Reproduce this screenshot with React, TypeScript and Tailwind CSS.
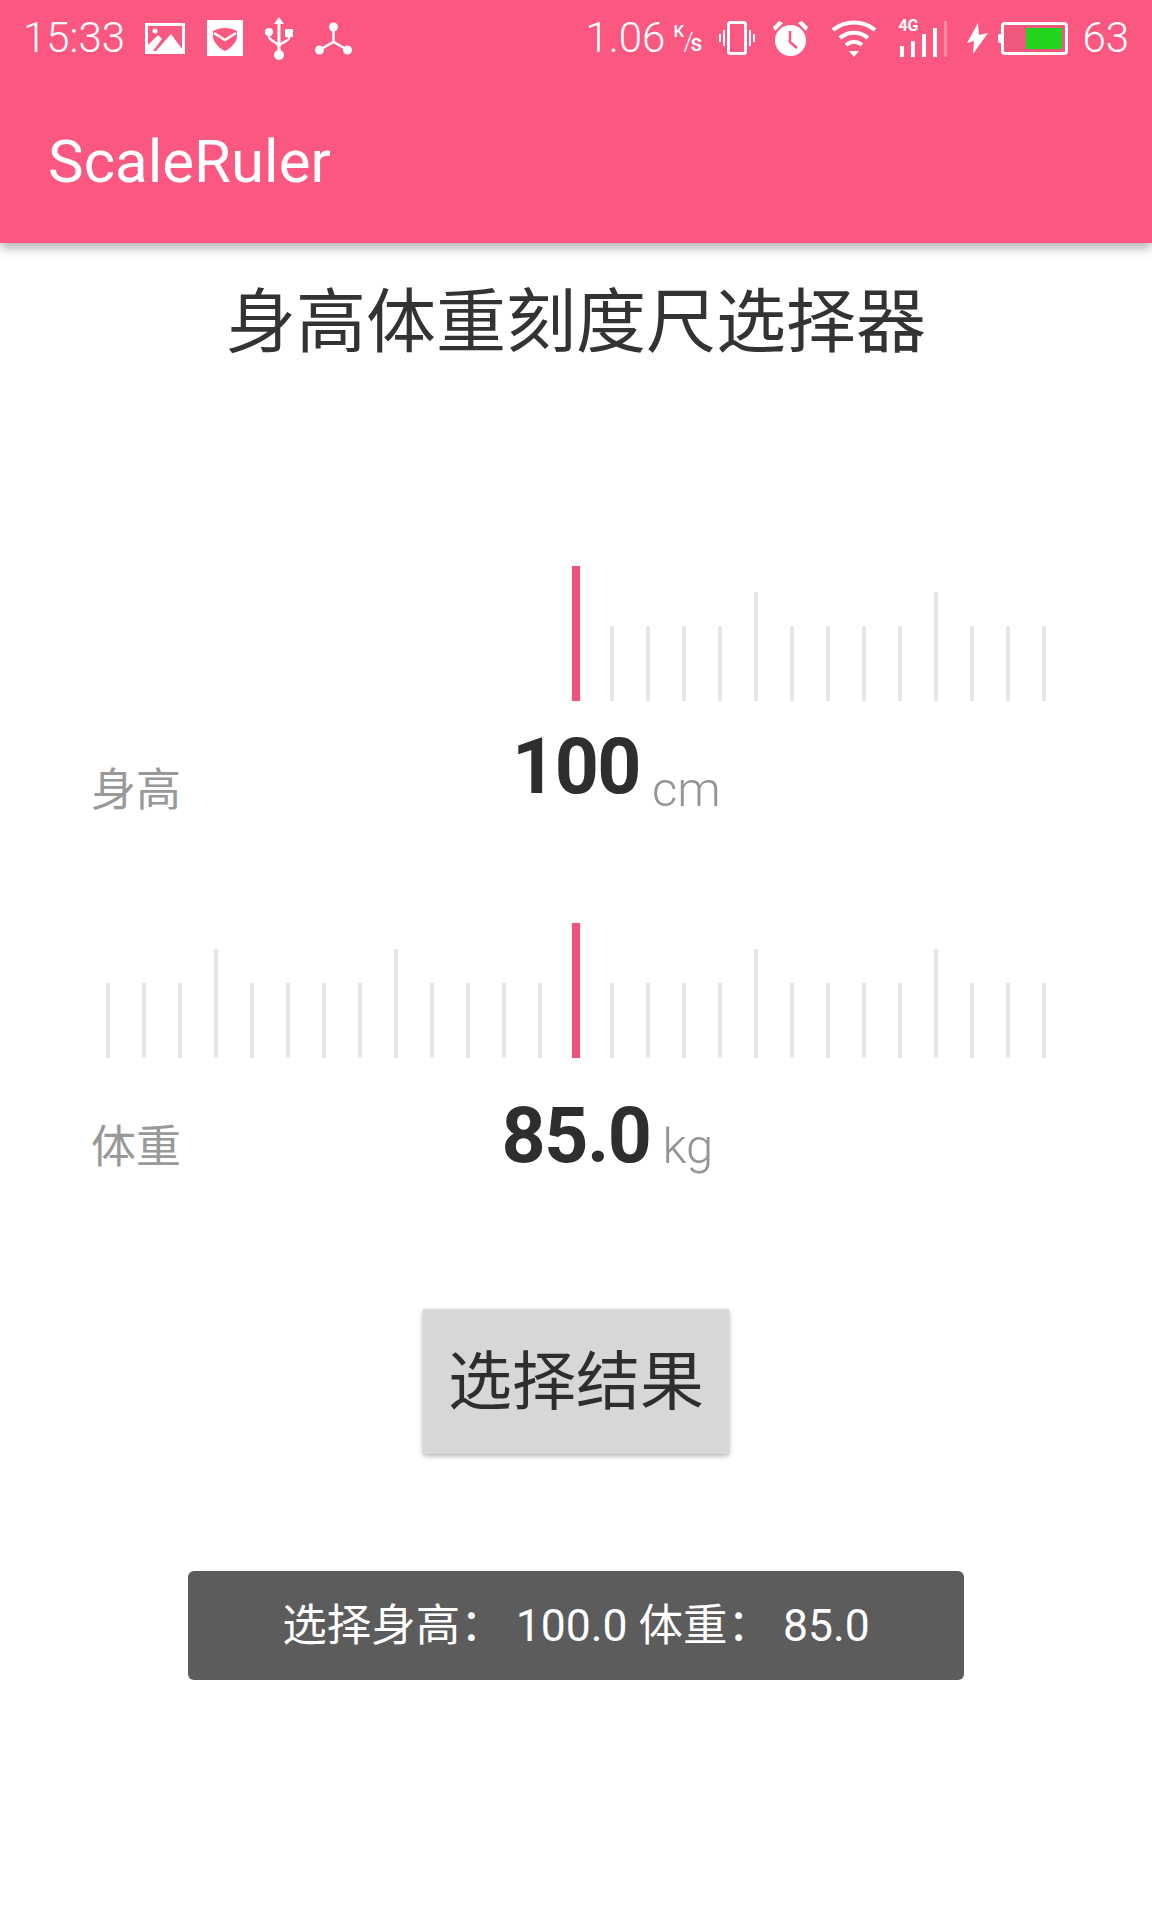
const TICKS = Array.from({ length: 27 }, (_, i) => i - 13)

function StatusBar() {
  return (
    <div className="flex items-center h-[76px] pl-[23px] pr-[23px] text-white">
      <span className="text-[42px] font-light leading-none w-[100px]">15:33</span>
      {/* picture */}
      <svg className="ml-[22px] w-[40px] h-[31px]" viewBox="0 0 40 31">
        <path fill="#fff" fillRule="evenodd" d="M0 0h40v31H0zM3 3v19l10-10 4 4-9 12h3l15-17 11 15V3z" />
        <circle cx="10" cy="8" r="2.5" fill="#fff" />
      </svg>
      {/* pocket */}
      <svg className="ml-[22px] w-[36px] h-[36px]" viewBox="0 0 36 36">
        <path fill="#fff" fillRule="evenodd" d="M0 0h36v36H0zM6 11v6c0 5 8 13 12 14 4-1 12-9 12-14v-6C23 7 13 7 6 11z" />
        <path fill="none" stroke="#fff" strokeWidth="2.5" d="M7 13l11 7 11-7" />
      </svg>
      {/* usb */}
      <svg className="ml-[22px] w-[28px] h-[43px]" viewBox="0 0 28 43">
        <path fill="#fff" d="M14 0l5 7h-3.5v26h-3V7H9z" />
        <circle cx="14" cy="38" r="5" fill="#fff" />
        <circle cx="4" cy="15" r="4" fill="#fff" />
        <rect x="20" y="12" width="8" height="8" fill="#fff" />
        <path fill="none" stroke="#fff" strokeWidth="2.5" d="M4 15v5c0 3 9 6 10 9M24 18v3c0 3-9 5-10 8" />
      </svg>
      {/* tree */}
      <svg className="ml-[22px] w-[37px] h-[33px]" viewBox="0 0 37 33">
        <circle cx="18.5" cy="5" r="4.5" fill="#fff" />
        <circle cx="4.5" cy="28" r="4.5" fill="#fff" />
        <circle cx="32.5" cy="28" r="4.5" fill="#fff" />
        <path fill="none" stroke="#fff" strokeWidth="2.5" d="M18.5 5v15M4.5 28l14-8 14 8" />
      </svg>

      <span className="ml-auto text-[42px] font-light leading-none">1.06</span>
      {/* K/s */}
      <span className="relative ml-[8px] w-[29px] h-[31px] text-[17px] font-medium leading-none">
        <span className="absolute left-0 top-0">K</span>
        <span className="absolute left-[10px] top-[7px] text-[25px] font-light">/</span>
        <span className="absolute right-0 -bottom-[1px] text-[23px]">s</span>
      </span>
      {/* vibrate */}
      <svg className="ml-[17px] w-[36px] h-[34px]" viewBox="0 0 36 34">
        <rect x="9.5" y="1.5" width="17" height="31" rx="2" fill="none" stroke="#fff" strokeWidth="3" />
        <path fill="none" stroke="#fff" strokeWidth="2" d="M5 9v16M1 13v8M31 9v16M35 13v8" />
      </svg>
      {/* alarm */}
      <svg className="ml-[18px] w-[35px] h-[35px]" viewBox="0 0 35 35">
        <circle cx="17.5" cy="19.5" r="15.5" fill="#fff" />
        <path fill="#fff" d="M0 6l6-6 4 2-8 8zM35 6l-6-6-4 2 8 8z" />
        <path fill="none" stroke="#fa5880" strokeWidth="2.5" d="M17 10v11l7 6" />
      </svg>
      {/* wifi */}
      <svg className="ml-[23px] w-[46px] h-[38px]" viewBox="0 0 46 38">
        <path fill="none" stroke="#fff" strokeWidth="4" d="M2 11c12-10 30-10 42 0M9 19c8-7 20-7 28 0M15 26c5-4 11-4 16 0" />
        <path fill="#fff" d="M18 32h10l-5 6z" />
      </svg>
      {/* signal */}
      <div className="relative ml-[21px] w-[49px] h-[38px]">
        <span className="absolute left-0 -top-[1px] text-[16px] font-bold leading-none">4G</span>
        <div className="absolute inset-0 flex items-end gap-[7px] pl-[2px]">
          <div className="w-[4px] h-[11px] bg-white" />
          <div className="w-[4px] h-[16px] bg-white" />
          <div className="w-[4px] h-[23px] bg-white" />
          <div className="w-[4px] h-[29px] bg-white" />
          <div className="w-[3px] h-[36px] bg-white/30" />
        </div>
      </div>
      {/* bolt */}
      <svg className="ml-[20px] w-[21px] h-[31px]" viewBox="0 0 21 31">
        <path fill="#fff" d="M11 0L0 20l7-2-1 13 15-21-9 2z" />
      </svg>
      {/* battery */}
      <div className="relative ml-[13px] w-[67px] h-[33px] flex justify-end items-center pr-[3px] rounded-[4px] border-[3px] border-white bg-[#dc5a78]/40">
        <div className="absolute -left-[6px] top-[9px] w-[3px] h-[9px] rounded-l-[2px] bg-white" />
        <div className="w-[36px] h-[21px] bg-[#22d31d]" />
      </div>
      <span className="ml-[14px] text-[42px] font-light leading-none">63</span>
    </div>
  )
}

function Ruler({ leftTicks }: { leftTicks: boolean }) {
  return (
    <div className="flex items-end justify-center h-[135px]">
      {TICKS.map(k => (
        <div key={k} className="w-[36px] flex justify-center">
          {k === 0 && <div className="w-[8px] h-[135px] bg-[#f0527b]" />}
          {k !== 0 && (k > 0 || leftTicks) && (
            <div className={`w-[4px] bg-[#e6e6e6] ${k % 5 === 0 ? 'h-[109px]' : 'h-[75px]'}`} />
          )}
        </div>
      ))}
    </div>
  )
}

function Measure({ label, value, unit, labelClass, unitClass }: { label: string; value: string; unit: string; labelClass: string; unitClass: string }) {
  return (
    <div className="grid grid-cols-[1fr_auto_1fr] items-start h-[87px]">
      <span className={`pl-[91px] text-[45px] leading-none text-[#999] ${labelClass}`}>{label}</span>
      <span className="text-[77px] font-bold tracking-[-1.5px] leading-none text-[#2e2e2e]">{value}</span>
      <span className={`text-[49px] font-light leading-none text-[#949494] ${unitClass}`}>{unit}</span>
    </div>
  )
}

export default function App() {
  return (
    <div className="w-[1152px] h-[1920px] bg-white overflow-hidden font-['Roboto','Noto_Sans_CJK_SC',sans-serif]">
      <header className="h-[243px] bg-[#fa5880] shadow-[0_5px_10px_rgba(0,0,0,0.3)] relative">
        <StatusBar />
        <div className="pl-[48px] pt-[56px] text-[60px] leading-none text-white">ScaleRuler</div>
      </header>

      <h1 className="pt-[42px] text-center text-[70px] leading-[76px] font-normal text-[#333]">身高体重刻度尺选择器</h1>

      <div className="mt-[205px]"><Ruler leftTicks={false} /></div>
      <div className="mt-[28px]"><Measure label="身高" value="100" unit="cm" labelClass="mt-[39px]" unitClass="mt-[36px] ml-[12px]" /></div>

      <div className="mt-[107px]"><Ruler leftTicks /></div>
      <div className="mt-[40px]"><Measure label="体重" value="85.0" unit="kg" labelClass="mt-[27px]" unitClass="mt-[24px] ml-[12px]" /></div>

      <div className="mt-[124px] flex justify-center">
        <button className="w-[306px] h-[145px] pt-[3px] bg-[#d5d8d7] text-[64px] text-[#2e2e2e] shadow-[0_2px_5px_rgba(0,0,0,0.3)]">选择结果</button>
      </div>

      <div className="mt-[117px] flex justify-center">
        <div className="w-[776px] h-[109px] pt-[2px] rounded-[6px] bg-[#5c5c5c] flex items-center justify-center text-[44.5px] text-white whitespace-pre">选择身高： 100.0 体重： 85.0</div>
      </div>
    </div>
  )
}
